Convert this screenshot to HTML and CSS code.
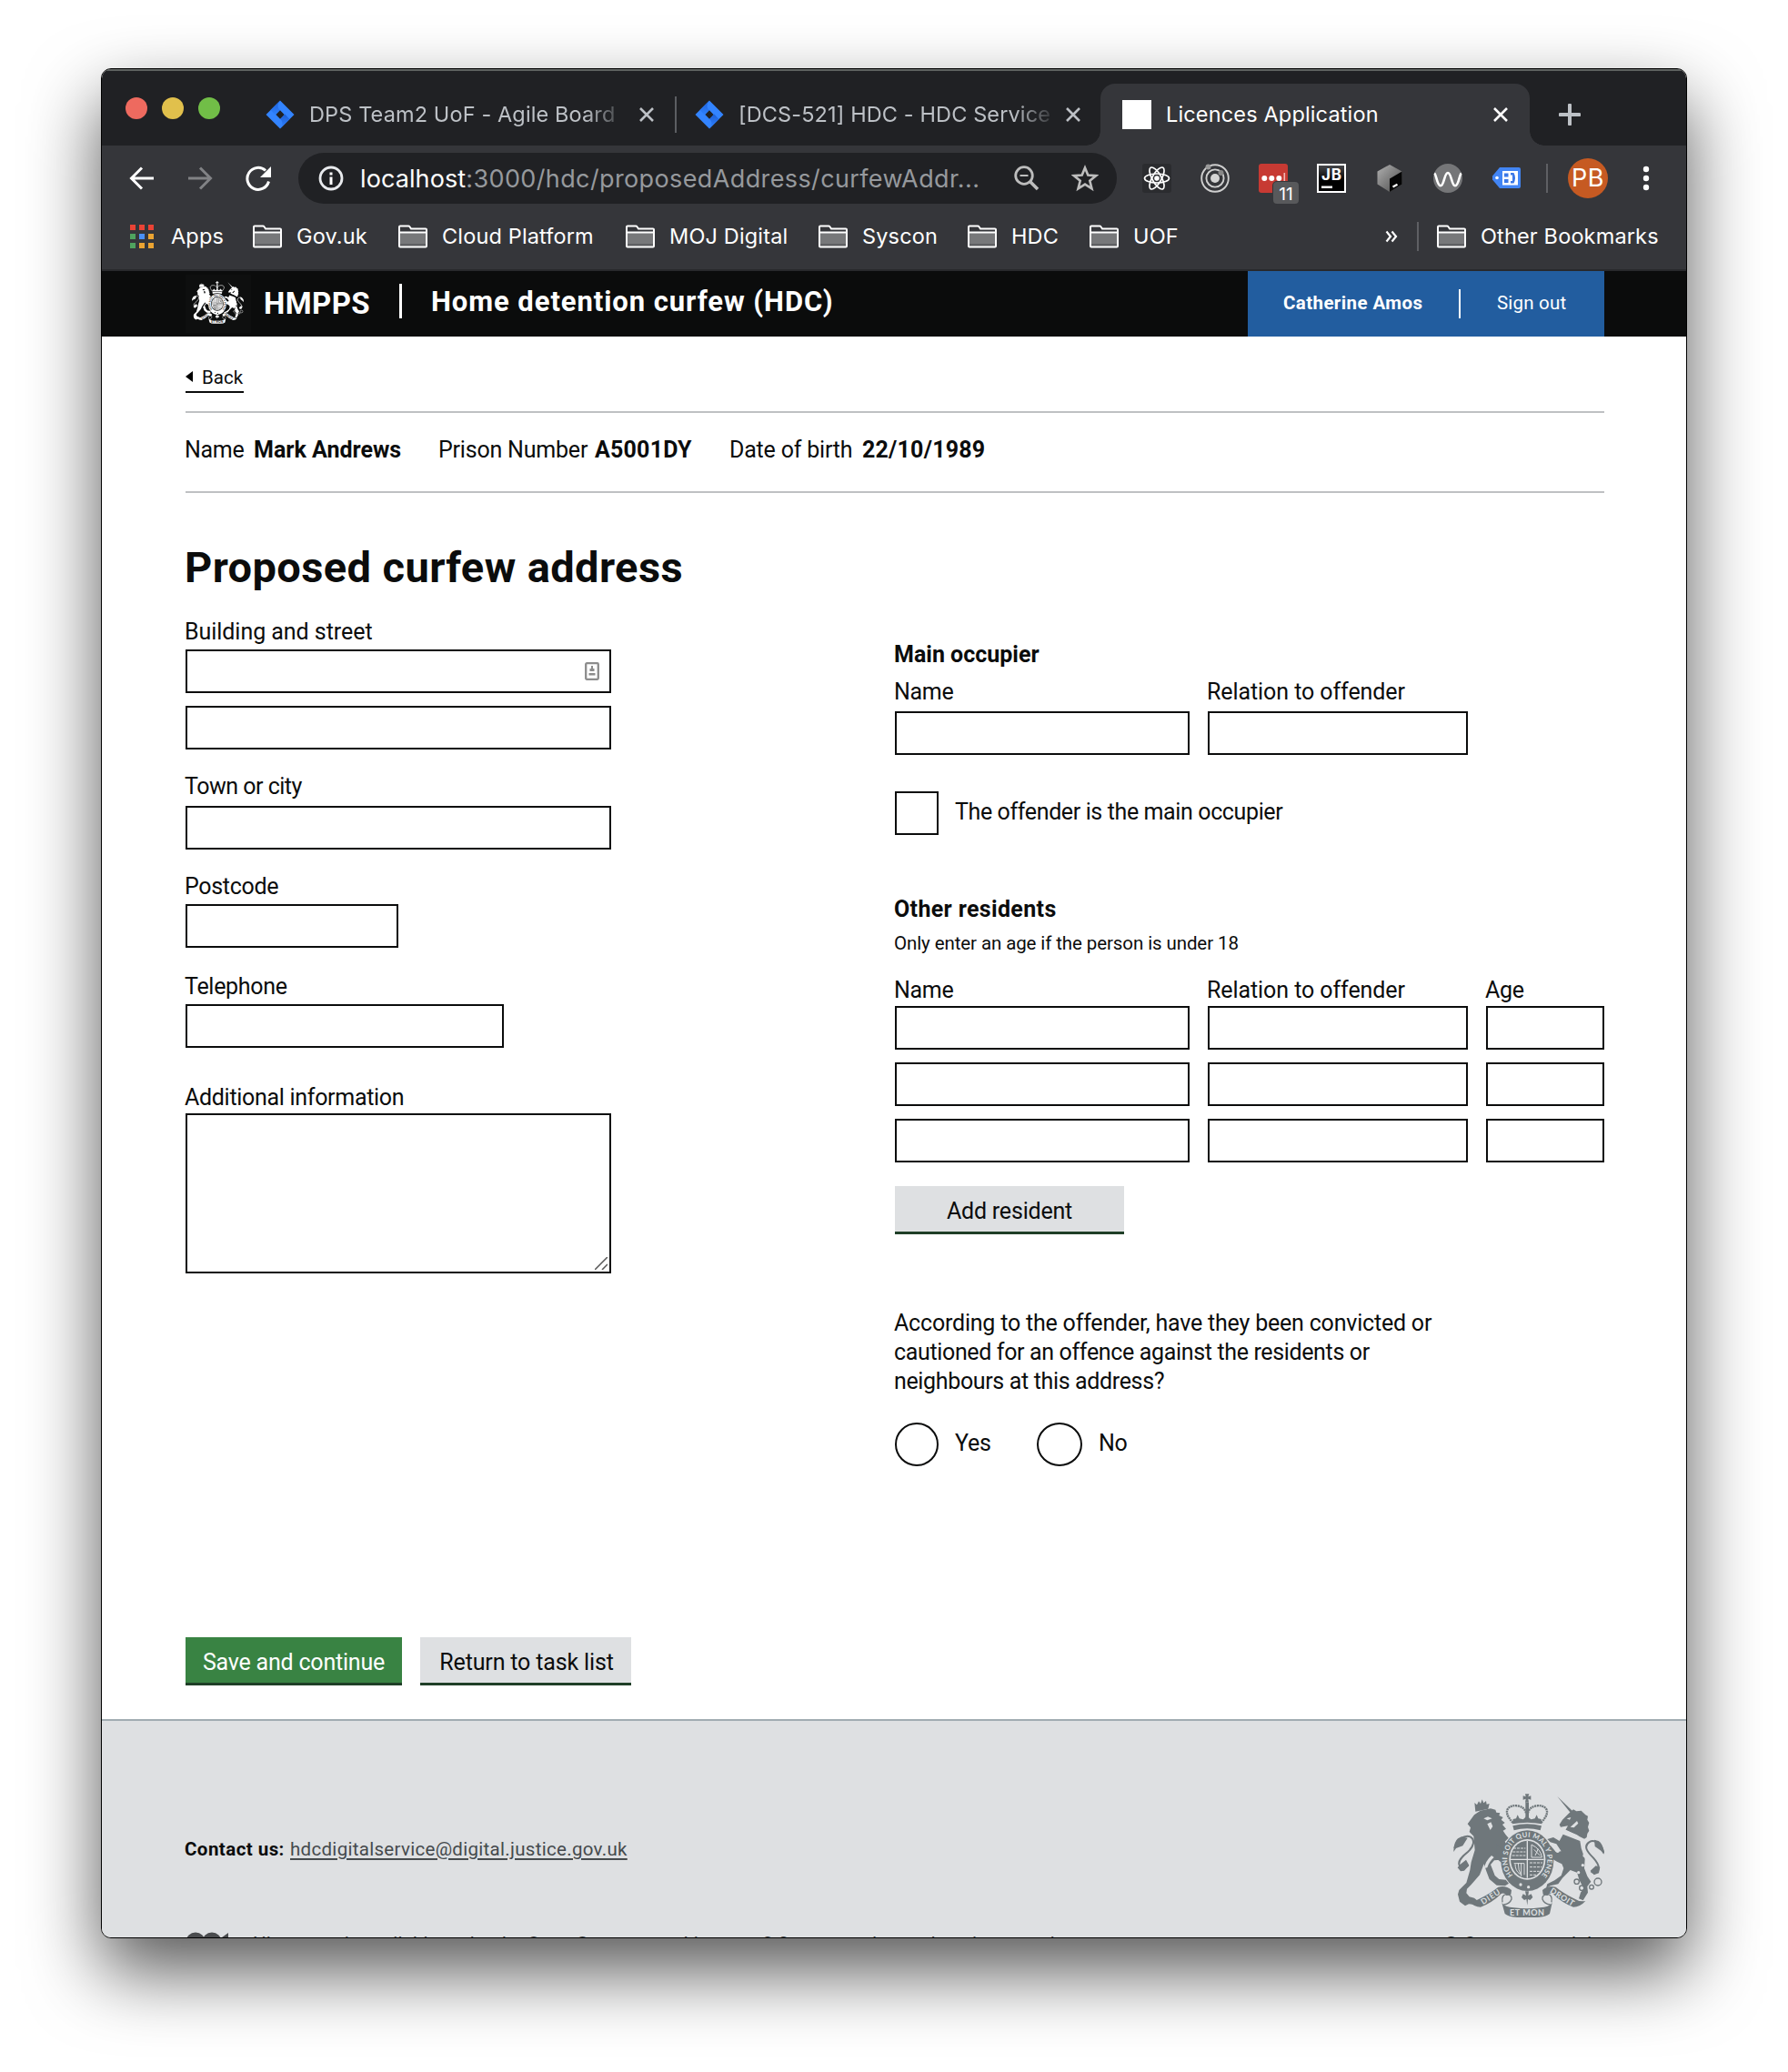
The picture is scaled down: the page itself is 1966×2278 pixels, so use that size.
FILE: index.html
```html
<!DOCTYPE html>
<html lang="en">
<head>
<meta charset="utf-8">
<title>Licences Application</title>
<link rel="stylesheet" href="styles.css">
</head>
<body>
<svg class="defs" width="0" height="0" aria-hidden="true">
  <defs>
    <linearGradient id="jiraL" x1="0" y1="0" x2="0" y2="1"><stop offset="0" stop-color="#1d5fd6"/><stop offset="1" stop-color="#2f82ff"/></linearGradient>
    <linearGradient id="hexG" x1="0" y1="0" x2="1" y2="1"><stop offset="0" stop-color="#b0b0b0"/><stop offset="1" stop-color="#4a4a4a"/></linearGradient>
    <linearGradient id="jbG" x1="0" y1="0" x2="0" y2="1"><stop offset="0" stop-color="#4a4b4e"/><stop offset=".6" stop-color="#000"/></linearGradient>
    <path id="garter" d="M311 365 A 66 74 0 1 1 405 365"/>
    <symbol id="jira" viewBox="0 0 32 32">
      <path fill="#3384ff" d="M16 0.5 31.5 16 16 31.5 0.500 16z"/>
      <path fill="url(#jiraL)" d="M16 .5c-3.500 4-3 8 0 10.800L10.600 16.500 5.500 11z"/>
      <path fill="url(#jiraL)" d="M16 31.500c3.500-4 3-8 0-10.800l5.400-5.200 5.100 5.500z"/>
      <path fill="#202124" d="M16 11.300 20.600 16 16 20.700 11.400 16z"/>
    </symbol>
    <symbol id="close" viewBox="0 0 18 18"><path d="M2 2 16 16M16 2 2 16" fill="none" stroke="currentColor" stroke-width="2.600"/></symbol>
    <symbol id="folder" viewBox="0 0 32 26">
      <path fill="#77787a" d="M2 9h28v13H2z"/><path fill="#5f6062" d="M2 21h28v3H2z"/>
      <path fill="none" stroke="#fff" stroke-width="2" d="M1 23.500V2.500Q1 1.500 2 1.500h9q1 0 1.500.800L14 4.500h16q1 0 1 1v18q0 1-1 1H2q-1 0-1-1zM1 8.500h30"/>
    </symbol>
    <symbol id="arms" viewBox="114 96 498 408">
      <g fill="currentColor">
        <!-- crown -->
        <path d="M351 97h13l-3 9 9-3v13l-9-3 2 12h-12l2-12-9 3v-13l9 3z"/>
        <g fill="none" stroke="currentColor" stroke-width="7" stroke-dasharray="6 2">
          <path d="M311 192C270 150 300 132 326 136q24 5 28 24M403 192c41-42 11-60-15-56q-24 5-28 24"/>
        </g>
        <path d="M352 126h11v50h-11zM309 196l2-16 10-2 5-12 6 12 12 3 5-4 8-13 8 13 6 4 12-3 6-12 5 12 10 2 2 16q-48-10-97 0z"/>
        <path d="M310 202q47-13 95 0l-4 15q-44-13-87 0z"/>
        <!-- lion -->
        <path d="M184 126l8 7 6-12 6 8 5-14 5 12 8-7 2 11 9-2-4 17-42 9z"/>
        <path d="M183 166l20-14 34-7 16 4 3 9 12 2-3 8 13 6-6 8 12 10-8 6 12 14-10 6 8 12 10 12-12 12 14 22-8 12-3 14-18 12-20 2-12 14 8 20 6 16 14 12 22 2 10 12-12 8-28-2-24-20-10-26-8-24-14 36-28 32-14 14-2 14 10 12 16 4 12 10-8 12-22-2-12 6-18-14-6-24 4-14 24-24 12-42 4-26 12-40-4-46-14-14 4-14-10-12z"/>
        <path d="M256 262l30 30 12 36-12 6-30-24z"/>
        <path fill="none" stroke="currentColor" stroke-width="6" d="M118 276c8-30 32-44 52-38 18 10 10 34-8 50-20 16-34 30-28 44 8 12 20 8 30 0"/>
        <path d="M115 288q0-32 14-44l12-6 20 4-16 26-22 8zM128 340l10 12 12-2 16-18-10-18-20 16z"/>
        <!-- unicorn -->
        <path d="M457 105l50 48-6 7z"/>
        <path d="M510 148l10 6 16-2 14 14 8 4-2 12 6 10-4 14 4 12-6 10-2 12-12 8-20-16-38-16 8-14-24 4-4-8 10-16 20-20z"/>
        <path d="M476 230l56 22 4 24 12 36-2 30 10 26 12 18-12 16 2 20-16 26-14-6 6-20 10-14-14-26-8-26-22-8-26 26-14 20-26 6-14 8 4-14 24-12 22-16 8-24-6-14-16-8-24-14-14-32 16-8 18 22 18-2-16-24-20-6-10-10 20-6 20 12z"/>
        <path fill="none" stroke="currentColor" stroke-width="6" d="M610 292c-6-34-32-46-48-36-20 14-6 32 14 52 18 20 24 34 12 46-8 6-14 4-20-2"/>
        <path d="M611 296q-2-34-18-44l-14-4 2 22 20 14zM566 350l12 14 16-6 4-20-14-4z"/>
        <g fill="none" stroke="currentColor" stroke-width="4"><circle cx="591" cy="387" r="12"/><circle cx="570" cy="404" r="7"/><circle cx="538" cy="407" r="8"/><circle cx="521" cy="386" r="8"/></g>
        <!-- garter and shield -->
        <ellipse cx="358" cy="317" rx="87" ry="100"/>
      </g>
      <g fill="var(--arms-ground)">
        <path d="M214 178l14-6 14 6-16 6zM226 196l12-6 6 14-8 12zM488 178l14-4-4 8zM500 206l22-20 4 8-14 14zM482 214l66 32-3 8-66-30z"/>
        <circle cx="467" cy="229" r="6"/><circle cx="458" cy="285" r="6"/><circle cx="547" cy="300" r="6"/><circle cx="541" cy="332" r="5"/><circle cx="527" cy="356" r="5"/>
        <ellipse cx="358" cy="313" rx="60" ry="67"/>
        <circle cx="336" cy="396" r="5"/><circle cx="362" cy="404" r="5"/>
        <path d="M240 300q-20 18-24 42l10-2q6-20 22-34z"/>
      </g>
      <g fill="currentColor">
        <ellipse cx="358" cy="313" rx="55" ry="62"/>
        <path d="M351 418h12l-2 14 10-5 5 11-9 9-7-3-2 20-3-20-7 3-9-9 5-11 10 5z"/>
        <!-- ribbon -->
        <path d="M164 450q20 4 38-8 38-20 60-38 26-6 44 10l-2 14-14 4q-8-10-18-6-30 30-68 44-22 0-40-20zM550 450q-20 4-38-8-38-20-60-38-26-6-44 10l2 14 14 4q8-10 18-6 30 30 68 44 22 0 40-20z"/>
        <path fill="none" stroke="currentColor" stroke-width="4" d="M276 454q-4-26 14-26 18 2 16 16-6 16-26 18M438 454q4-26-14-26-18 2-16 16 6 16 26 18"/>
        <path d="M274 456q10 14 40 16 44 6 86 0 30-2 40-16l-8 36q-12 10-40 12h-68q-28-2-40-12z"/>
      </g>
      <g fill="none" stroke="var(--arms-ground)" stroke-width="4">
        <path d="M358 252v122M303 313h110"/>
        <path stroke-width="3" stroke-dasharray="9 3" d="M312 276h40M310 288h42M308 300h44M366 324h42M366 338h40M366 352h32M366 364h22"/>
        <path stroke-width="3" d="M372 264v42h34q-2-26-34-42zM380 280l20 20M384 300l10-22M318 328q0 22 16 34M328 324q0 26 10 42M338 324v44M314 326h34v38"/>
      </g>
      <g fill="var(--arms-ground)" font-family="Lato, sans-serif" font-weight="700">
        <text font-size="23" textLength="334"><textPath href="#garter" textLength="334">HONI SOIT QUI MAL Y PENSE</textPath></text>
        <text font-size="27" x="300" y="498" textLength="114">ET MON</text>
        <text font-size="26" transform="translate(212 463) rotate(-33)" textLength="70">DIEU</text>
        <text font-size="26" transform="translate(431 421) rotate(32)" textLength="88">DROIT</text>
      </g>
    </symbol>
  </defs>
</svg>

<div class="window">
  <div class="tabstrip">
    <div class="lights"><i class="light red"></i><i class="light amber"></i><i class="light green"></i></div>
    <div class="tab tab-1">
      <svg class="fav"><use href="#jira"/></svg>
      <span class="tab-title t-dps">DPS Team2 UoF - Agile Board</span>
      <svg class="x"><use href="#close"/></svg>
    </div>
    <div class="tab tab-2">
      <svg class="fav"><use href="#jira"/></svg>
      <span class="tab-title t-dcs">[DCS-521] HDC - HDC Service</span>
      <svg class="x"><use href="#close"/></svg>
    </div>
    <div class="tab tab-3">
      <i class="fav blank"></i>
      <span class="tab-title t-lic">Licences Application</span>
      <svg class="x"><use href="#close"/></svg>
    </div>
    <svg class="plus" viewBox="0 0 24 24"><path d="M12 1.500v21M1.500 12h21" stroke="#bdc1c6" stroke-width="4" stroke-linecap="round"/></svg>
  </div>

  <div class="toolbar">
    <svg class="nav n-back" viewBox="0 0 28 28"><path d="M27 14H3M14 2.500 2.500 14 14 25.500" fill="none" stroke="#fff" stroke-width="3"/></svg>
    <svg class="nav n-fwd" viewBox="0 0 28 28"><path d="M1 14h24M14 2.500 25.500 14 14 25.500" fill="none" stroke="#818285" stroke-width="3"/></svg>
    <svg class="nav n-reload" viewBox="0 0 28 28"><path d="M25.500 17.500A12 12 0 1 1 22 5.500" fill="none" stroke="#fff" stroke-width="3"/><path d="M28 1v12H16z" fill="#fff"/></svg>
    <div class="omnibox">
      <svg class="info" viewBox="0 0 28 28"><circle cx="14" cy="14" r="12" fill="none" stroke="#e8eaed" stroke-width="2.800"/><path d="M12.500 12.500h3V21h-3zM12.500 7.500h3v3h-3z" fill="#fff"/></svg>
      <span class="url"><b>localhost</b>:3000/hdc/proposedAddress/curfewAddr...</span>
      <svg class="lens" viewBox="0 0 28 28"><circle cx="11" cy="11" r="9.300" fill="none" stroke="#bdbdbd" stroke-width="2.800"/><path d="M17.500 17.500 26 26" stroke="#bdbdbd" stroke-width="3.500"/><path d="M6.500 11h9" stroke="#bdbdbd" stroke-width="2"/></svg>
      <svg class="star" viewBox="0 0 30 30"><path d="M15 3.500 18.300 11.600 27 12.200 20.300 17.800 22.500 26.300 15 21.600 7.500 26.300 9.700 17.800 3 12.200 11.700 11.600z" fill="none" stroke="#bdbdbd" stroke-width="2.600"/></svg>
    </div>
    <div class="exts">
      <svg viewBox="0 0 32 32"><rect width="32" height="32" rx="3" fill="#2b2c2f"/><g fill="none" stroke="#fff" stroke-width="1.700"><ellipse cx="16" cy="16" rx="13.500" ry="5"/><ellipse cx="16" cy="16" rx="13.500" ry="5" transform="rotate(60 16 16)"/><ellipse cx="16" cy="16" rx="13.500" ry="5" transform="rotate(120 16 16)"/></g><circle cx="16" cy="16" r="2.800" fill="#fff"/></svg>
      <svg viewBox="0 0 32 32"><g fill="none" stroke="#cfcfcf" stroke-width="1.900"><circle cx="16" cy="16" r="14.800"/><circle cx="16" cy="16" r="9.600"/></g><circle cx="16" cy="16" r="5" fill="#d4d4d4"/><circle cx="8.500" cy="3.500" r="3" fill="#999"/><circle cx="22.500" cy="10" r="3" fill="#888"/></svg>
      <span class="pass"><svg viewBox="0 0 32 32"><rect width="32" height="32" rx="3" fill="#c73a33"/><g fill="#fff"><circle cx="6.300" cy="16" r="3"/><circle cx="14.300" cy="16" r="3"/><circle cx="22.300" cy="16" r="3"/></g><path fill="#f3b9b5" d="M27.500 10h1.600v12h-1.600z"/></svg><em>11</em></span>
      <svg viewBox="0 0 32 32"><rect x="1" y="1" width="30" height="30" fill="url(#jbG)" stroke="#fff" stroke-width="2"/><text x="5" y="18" font-family="Inter, sans-serif" font-weight="700" font-size="17" fill="#fff" textLength="22">JB</text><path d="M5 24.500h12v2.400H5z" fill="#fff"/></svg>
      <svg viewBox="0 0 32 32"><path d="M16 1 29.500 8.500v14L16 31 2.500 22.500v-14z" fill="url(#hexG)"/><path d="M29.500 8.500v14L16 31V16.500z" fill="#050505"/><path d="M19.500 25.500l5-2.800" stroke="#fff" stroke-width="2.200"/></svg>
      <svg viewBox="0 0 32 32"><circle cx="16" cy="16" r="16" fill="#757678"/><path d="M1.200 10.500C3.500 12 4 24.300 8 24.300S12 10 16 10s4 14.300 8 14.300S28.500 12 30.800 10.500" fill="none" stroke="#fff" stroke-width="2.600"/></svg>
      <svg viewBox="0 0 32 32"><path d="M9 4h21q2 0 2 2v19q0 2-2 2H9L1 17.500v-4z" fill="#4285f4"/><circle cx="6" cy="15.500" r="1.800" fill="#fff"/><path d="M12 8h17v15.500H12z" fill="#fff"/><path d="M14 10.500h4.500v4H14zM14 17h4.500v4H14zM21 10h3.500q3 5.700 0 11.500H21V19h2V12.500h-2z" fill="#3b78e7"/></svg>
    </div>
    <i class="sep"></i>
    <span class="avatar">PB</span>
    <svg class="dots" viewBox="0 0 8 28"><g fill="#fff"><circle cx="4" cy="4" r="3.200"/><circle cx="4" cy="14" r="3.200"/><circle cx="4" cy="24" r="3.200"/></g></svg>
  </div>

  <div class="bookmarks">
    <span class="bm b-apps"><svg class="apps" viewBox="0 0 26 27"><g fill="#ea4335"><path d="M0 0h6v6H0zM10 0h6v6h-6zM20 0h6v6h-6z"/></g><path fill="#4fa35f" d="M0 10h6v6H0zM0 20h6v6H0z"/><path fill="#4a90f5" d="M10 10h6v6h-6z"/><path fill="#eba432" d="M20 10h6v6h-6zM10 20h6v6h-6zM20 20h6v6h-6z"/></svg>Apps</span>
    <span class="bm b-gov"><svg class="folder"><use href="#folder"/></svg>Gov.uk</span>
    <span class="bm b-cloud"><svg class="folder"><use href="#folder"/></svg>Cloud Platform</span>
    <span class="bm b-moj"><svg class="folder"><use href="#folder"/></svg>MOJ Digital</span>
    <span class="bm b-sys"><svg class="folder"><use href="#folder"/></svg>Syscon</span>
    <span class="bm b-hdc"><svg class="folder"><use href="#folder"/></svg>HDC</span>
    <span class="bm b-uof"><svg class="folder"><use href="#folder"/></svg>UOF</span>
    <svg class="more" viewBox="0 0 14 14"><path d="M1.500 1.500 6 7 1.500 12.500M7.500 1.500 12 7 7.500 12.500" fill="none" stroke="#fff" stroke-width="2.200"/></svg>
    <i class="sep"></i>
    <span class="bm b-other"><svg class="folder"><use href="#folder"/></svg>Other Bookmarks</span>
  </div>

  <header class="masthead">
    <span class="arms-box"><svg class="arms-small"><use href="#arms"/></svg></span>
    <span class="org">HMPPS</span>
    <i class="bar"></i>
    <span class="service">Home detention curfew (HDC)</span>
    <div class="user"><strong>Catherine Amos</strong><i></i><a>Sign out</a></div>
  </header>

  <main class="page">
    <a class="back"><svg viewBox="0 0 8 12"><path d="M8 0v12L0 6z"/></svg>Back</a>
    <div class="summary">
      <span class="s-name">Name</span><b class="s-mark">Mark Andrews</b>
      <span class="s-num">Prison Number</span><b class="s-id">A5001DY</b>
      <span class="s-dob">Date of birth</span><b class="s-date">22/10/1989</b>
    </div>
    <h1>Proposed curfew address</h1>
    <form class="columns">
      <div class="left">
        <label class="l-street">Building and street</label>
        <div class="box contact"><svg viewBox="0 0 16 20"><rect x="1.200" y="1.200" width="13.600" height="17.600" rx="1" fill="none" stroke="#8c8c8c" stroke-width="2.300"/><path d="M7 4h2v3h1.500v3h-5V7H7zM4.500 12h7v2.500h-7z" fill="#8c8c8c"/></svg></div>
        <div class="box second"></div>
        <label class="l-town">Town or city</label>
        <div class="box"></div>
        <label class="l-post">Postcode</label>
        <div class="box postcode"></div>
        <label class="l-tel">Telephone</label>
        <div class="box telephone"></div>
        <label class="l-info">Additional information</label>
        <div class="box area"><svg viewBox="0 0 14 14"><path d="M0 14 14 0M8 14l6-6" stroke="#555" stroke-width="1.500"/></svg></div>
      </div>
      <div class="right">
        <h2>Main occupier</h2>
        <div class="grid occupier">
          <label>Name</label><label class="l-rel">Relation to offender</label><span></span>
          <div class="box"></div><div class="box"></div>
        </div>
        <div class="choice check"><i class="tick"></i><label>The offender is the main occupier</label></div>
        <h2 class="other">Other residents</h2>
        <p class="hint">Only enter an age if the person is under 18</p>
        <div class="grid heads"><label>Name</label><label class="l-rel">Relation to offender</label><label>Age</label></div>
        <div class="grid residents">
          <div class="box"></div><div class="box"></div><div class="box"></div>
          <div class="box"></div><div class="box"></div><div class="box"></div>
          <div class="box"></div><div class="box"></div><div class="box"></div>
        </div>
        <div class="btn add">Add resident</div>
        <p class="question">According to the offender, have they been convicted or<br><span>cautioned for an offence against the residents or<br>neighbours at this address?</span></p>
        <div class="choice radios"><i class="dot"></i><label class="yes">Yes</label><i class="dot wide"></i><label>No</label></div>
      </div>
    </form>
    <div class="actions"><div class="btn save">Save and continue</div><div class="btn return">Return to task list</div></div>
  </main>

  <footer class="footer">
    <div class="footer-top">
      <p><b>Contact us:</b><a>hdcdigitalservice@digital.justice.gov.uk</a></p>
      <svg class="arms-large"><use href="#arms"/></svg>
    </div>
    <div class="footer-bottom">
      <svg class="ogl" viewBox="0 0 48 20"><g fill="none" stroke="#4a4c4e" stroke-width="6"><circle cx="11" cy="11" r="7.500"/><circle cx="29" cy="11" r="7.500"/></g><path d="M40 6l7-5v19h-7z" fill="#4a4c4e"/></svg>
      <span class="licence">All content is available under the Open Government Licence v3.0, except where otherwise stated</span>
      <span class="crown">© Crown copyright</span>
    </div>
  </footer>
</div>
</body>
</html>
```

FILE: styles.css
```css
* { box-sizing: border-box; }
body { margin: 0; background: #fff; height: 2278px; overflow: hidden; padding: 75px 0 0 111px; font-family: Roboto, "Liberation Sans", sans-serif; font-size: 25px; color: #0b0c0c; }
svg { display: block; flex: none; }
.defs { position: absolute; }
i, em { font-style: normal; flex: none; }
p, h1, h2 { margin: 0; }

.window { width: 1744px; height: 2056px; border: 1px solid #000; border-radius: 11px; overflow: hidden; background: #fff; box-shadow: 0 36px 80px rgba(0,0,0,.66); }

/* browser chrome */
.tabstrip, .toolbar, .bookmarks { font-family: Inter, sans-serif; display: flex; align-items: center; color: #fff; }
.tabstrip { height: 84px; background: #202124; border-top: 2px solid #5f6361; padding-left: 26px; align-items: flex-start; font-size: 23.5px; }
.lights { display: flex; gap: 16px; width: 144px; padding-top: 29px; }
.light { width: 24px; height: 24px; border-radius: 50%; }
.red { background: #ee6a5f; }
.amber { background: #e1c04c; }
.green { background: #71be47; }
.tab { display: flex; align-items: center; height: 68px; margin-top: 14px; color: #bdc1c6; }
.fav { width: 32px; height: 32px; margin-right: 16px; }
.blank { background: #fff; }
.tab-title { flex: none; white-space: nowrap; overflow: hidden; line-height: 32px; letter-spacing: .12px; }
.x { width: 18px; height: 18px; }
.tab-1 { width: 459px; padding-left: 10px; }
.tab-1::after { content: ""; flex: none; width: 2px; height: 40px; background: #5c5e62; margin-left: 22px; }
.t-dps { width: 344px; margin-right: 18px; }
.tab-1 .tab-title, .tab-2 .tab-title { -webkit-mask-image: linear-gradient(90deg, #000 88%, transparent 102%); mask-image: linear-gradient(90deg, #000 88%, transparent 102%); }
.tab-2 { width: 469px; padding-left: 23px; }
.t-dcs { width: 344px; margin-right: 15px; }
.tab-3 { width: 472px; background: #35363a; border-radius: 16px 16px 0 0; color: #fff; padding-left: 24px; position: relative; }
.tab-3::before, .tab-3::after { content: ""; position: absolute; bottom: 0; width: 16px; height: 16px; }
.tab-3::before { left: -16px; background: radial-gradient(circle at 0 0, #202124 15.500px, #35363a 16px); }
.tab-3::after { right: -16px; background: radial-gradient(circle at 100% 0, #202124 15.500px, #35363a 16px); }
.t-lic { width: 359px; letter-spacing: .15px; }
.plus { width: 24px; height: 24px; margin: 36px 0 0 32px; }

.toolbar { height: 72px; background: #35363a; padding-left: 30px; }
.nav { width: 28px; height: 28px; }
.n-fwd { margin-left: 36px; }
.n-reload { margin-left: 36px; margin-right: 30px; }
.omnibox { flex: none; width: 900px; height: 56px; border-radius: 28px; background: #202124; display: flex; align-items: center; padding-left: 22px; }
.info { width: 28px; height: 28px; }
.url { flex: none; width: 719px; margin-left: 18px; font-size: 27px; color: #96999d; white-space: nowrap; letter-spacing: .38px; line-height: 34px; padding-top: 1px; }
.url b { color: #fff; font-weight: 400; letter-spacing: .1px; }
.lens { width: 28px; height: 28px; }
.star { width: 30px; height: 30px; margin-left: 35px; }
.exts { display: flex; gap: 32px; margin-left: 28px; }
.exts svg { width: 32px; height: 32px; }
.pass { position: relative; }
.pass em { position: absolute; left: 16px; top: 20px; width: 28px; height: 24px; border-radius: 4px; background: #58595b; box-shadow: 0 0 0 1px #35363a; font-size: 19px; line-height: 27px; text-align: center; }
.sep { width: 2px; height: 32px; background: #5f6064; }
.toolbar .sep { margin-left: 28px; }
.avatar { width: 44px; height: 44px; border-radius: 50%; background: #c65a22; font-size: 27px; line-height: 44px; text-align: center; margin-left: 22px; letter-spacing: .5px; }
.dots { width: 8px; height: 28px; margin-left: 38px; }

.bookmarks { height: 66px; background: #35363a; border-bottom: 2px solid #28292c; padding: 0 0 8px 31px; font-size: 23.5px; letter-spacing: .15px; }
.bm { display: flex; align-items: center; white-space: nowrap; flex: none; line-height: 30px; }
.bm svg { margin-right: 16px; }
.apps { width: 26px; height: 27px; }
.b-apps svg { margin-right: 19px; }
.folder { width: 32px; height: 26px; }
.b-apps { width: 135px; }
.b-gov { width: 160px; }
.b-cloud { width: 250px; }
.b-moj { width: 212px; }
.b-sys { width: 164px; }
.b-hdc { width: 134px; }
.b-uof { width: 325px; }
.more { width: 14px; height: 14px; margin-right: 21px; }
.bookmarks .sep { margin-right: 20px; }

/* service header */
.masthead { height: 72px; background: #0b0c0c; color: #fff; display: flex; align-items: flex-start; padding-left: 92px; white-space: nowrap; }
.masthead > * { flex: none; }
.arms-box { --arms-ground: #0b0c0c; width: 72px; height: 64px; margin-top: 4px; background: #0e0f0f; padding: 6px 7px; }
.arms-small { width: 57px; height: 49px; }
.org { width: 149px; margin-left: 14px; font-size: 33px; font-weight: 700; line-height: 40px; margin-top: 16px; letter-spacing: .4px; }
.bar { width: 3px; height: 38px; background: #fff; margin-top: 14px; }
.service { width: 898px; margin: 14px 0 0 32px; font-size: 31px; font-weight: 700; line-height: 40px; letter-spacing: .93px; }
.user { width: 392px; height: 72px; background: #225d9f; display: flex; align-items: flex-start; padding-left: 39px; font-size: 20.500px; line-height: 26px; }
.user strong { width: 193px; margin-top: 22px; letter-spacing: .4px; }
.user i { width: 2px; height: 32px; background: #fff; margin-top: 20px; }
.user a { margin: 22px 0 0 40px; letter-spacing: .2px; }

/* page */
.page { height: 1520px; padding: 32px 90px 0 92px; letter-spacing: -.2px; }
.back { display: flex; width: 64px; height: 30px; border-bottom: 2px solid #0b0c0c; font-size: 20.500px; line-height: 26px; letter-spacing: 0; }
.back svg { width: 8px; height: 12px; margin: 6px 10px 0 0; }
.summary { display: flex; height: 90px; margin-top: 20px; padding-top: 25px; border: solid #bfc1c3; border-width: 2px 0; line-height: 31px; white-space: nowrap; }
.summary > * { flex: none; }
.summary b { letter-spacing: 0; }
.summary .s-id, .summary .s-date { letter-spacing: .2px; }
.s-name { width: 76px; margin-left: -1px; letter-spacing: -.3px; }
.s-mark { width: 203px; }
.s-num { width: 172px; }
.s-id { width: 148px; }
.s-dob { width: 146px; }
h1 { margin: 54px 0 0 -1px; font-size: 47px; line-height: 56px; letter-spacing: .4px; }
h2 { font-size: 25px; line-height: 31px; margin-left: -1px; letter-spacing: 0; }
.columns { display: flex; height: 1148px; padding-top: 26px; }
.left { width: 780px; }
.right { width: 780px; padding-top: 26px; }
label { display: block; padding-top: 1px; line-height: 31px; margin: 0 0 -1px -1px; white-space: nowrap; letter-spacing: -.3px; }
.l-street { letter-spacing: -.05px; }
.l-rel { letter-spacing: -.08px; }
.box { height: 48px; border: 2px solid #0b0c0c; background: #fff; }
.left .box { width: 468px; margin-top: 6px; }
.left .second { margin-top: 14px; }
.contact { display: flex; justify-content: flex-end; padding: 12px 11px 0 0; }
.contact svg { width: 16px; height: 20px; }
.l-town, .l-post { margin-top: 24px; }
.l-town { letter-spacing: -.5px; }
.left label { margin-bottom: -2px; }
.left .l-town + .box { margin-top: 8px; }
.l-tel { margin-top: 26px; }
.l-info { margin-top: 38px; }
.left .l-info + .area { margin-top: 4px; }
.left .postcode { width: 234px; }
.left .telephone { width: 350px; }
.left .area { height: 176px; display: flex; justify-content: flex-end; align-items: flex-end; padding: 0 2px 2px 0; }
.area svg { width: 14px; height: 14px; }
.grid { display: grid; grid-template-columns: 324px 286px 130px; column-gap: 20px; }
.occupier { margin-top: 9px; row-gap: 7px; }
.choice { display: flex; }
.check { margin-top: 40px; height: 48px; }
.tick { width: 48px; height: 48px; border: 2px solid #0b0c0c; margin-right: 19px; }
.check label { margin-top: 6px; letter-spacing: -.38px; }
.other { margin-top: 66px; letter-spacing: .35px; }
.hint { font-size: 20.500px; line-height: 26px; margin: 9px 0 0 -1px; letter-spacing: -.1px; }
.heads { margin-top: 22px; }
.residents { row-gap: 14px; margin-top: 3px; }
.btn { height: 53px; line-height: 56px; border-bottom: 3px solid #1f3f27; background: #dee0e2; text-align: center; white-space: nowrap; }
.add { width: 252px; margin-top: 26px; }
.question { margin: 82px 0 -1px -1px; line-height: 32px; white-space: nowrap; }
.question span { letter-spacing: -.35px; }
.radios { margin-top: 30px; }
.dot { width: 48px; height: 48px; border: 2px solid #0b0c0c; border-radius: 50%; margin-right: 19px; }
.wide { width: 50px; }
.radios label { margin-top: 6px; }
.yes { width: 90px; }
.actions { display: flex; gap: 20px; }
.save { width: 238px; background: #398343; color: #fff; }
.return { width: 232px; padding-left: 2px; letter-spacing: -.15px; }

/* footer */
.footer { height: 240px; background: #dee0e2; border-top: 2px solid #a1acb2; padding: 80px 90px 0 92px; font-size: 20.500px; line-height: 26px; white-space: nowrap; }
.footer-top { display: flex; justify-content: space-between; height: 152px; }
.footer-top p { padding-top: 48px; display: flex; }
.footer-top b { width: 116px; margin-left: -1px; letter-spacing: .45px; }
.footer-top a { color: #454a4d; letter-spacing: .3px; text-decoration: underline; text-decoration-thickness: 2px; text-underline-offset: 3px; }
.arms-large { --arms-ground: #dee0e2; color: #6f777b; width: 166px; height: 136px; }
.footer-bottom { display: flex; color: #454a4d; height: 30px; }
.ogl { width: 48px; height: 20px; margin-right: 22px; }
.licence { width: 1319px; letter-spacing: .16px; }
.crown { letter-spacing: .4px; }
```
